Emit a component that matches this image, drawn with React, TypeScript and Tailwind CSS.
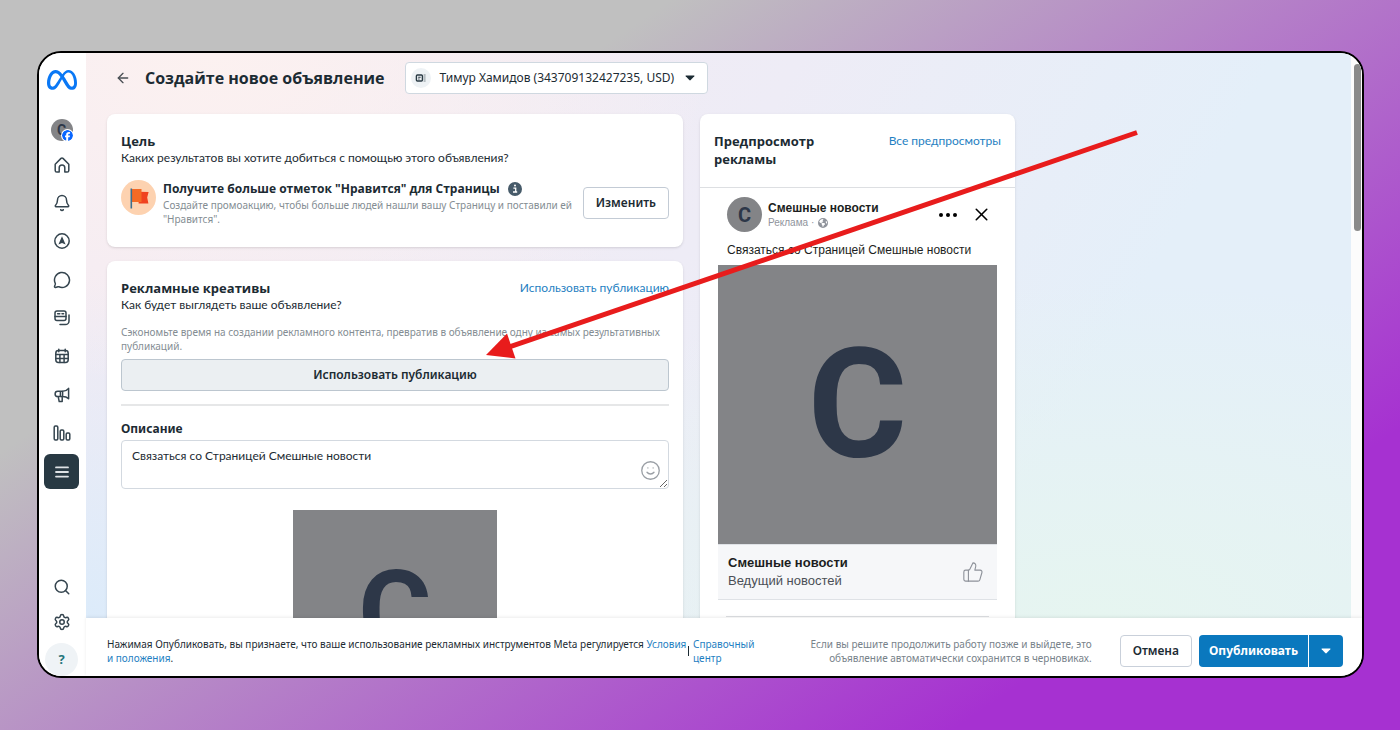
import React from 'react';
import { ArrowLeft, Bell, MessageCircle, Search, Settings, Smile, ThumbsUp, X } from 'lucide-react';
import { FaEarthAmericas, FaFacebook, FaMeta } from 'react-icons/fa6';

function HomeIcon() {
  return (
    <svg viewBox="0 0 18 18" className="size-[18px]" fill="none" stroke="currentColor" strokeWidth="1.5" strokeLinejoin="round">
      <path d="M2.2 8.2 8 2.4q1-.9 2 0l5.8 5.8v6.2a1.6 1.6 0 0 1-1.6 1.6h-2.4v-4.2a2.8 2.8 0 0 0-5.6 0V16H3.8a1.6 1.6 0 0 1-1.6-1.6Z" />
    </svg>
  );
}

function AdsIcon() {
  return (
    <svg viewBox="0 0 18 18" className="size-[18px]" fill="none">
      <circle cx="9" cy="9" r="7.2" stroke="currentColor" strokeWidth="1.5" />
      <path d="M9 4.2 12.6 12.6 9 11 5.4 12.6Z" fill="currentColor" />
    </svg>
  );
}

function PostsIcon() {
  return (
    <svg viewBox="0 0 18 18" className="size-[18px]" fill="none" stroke="currentColor" strokeWidth="1.5" strokeLinecap="round" strokeLinejoin="round">
      <rect x="2" y="2" width="11" height="9.6" rx="2" />
      <path d="M2 7.6h11M4.6 4.8h2.2M9 4.8h1.6" />
      <path d="M16 6v6a3.6 3.6 0 0 1-3.6 3.6H7" />
    </svg>
  );
}

function CalendarIcon() {
  return (
    <svg viewBox="0 0 18 18" className="size-[18px]" fill="none" stroke="currentColor" strokeWidth="1.5" strokeLinecap="round">
      <rect x="2.8" y="3.6" width="12.4" height="11.8" rx="2.6" />
      <path d="M2.8 7.4h12.4M2.8 11.4h12.4M6.9 7.4v8M11.1 7.4v8M5.8 2.2v2.6M12.2 2.2v2.6" />
    </svg>
  );
}

function MegaphoneIcon() {
  return (
    <svg viewBox="0 0 18 18" className="size-[18px]" fill="none" stroke="currentColor" strokeWidth="1.5" strokeLinejoin="round">
      <path d="M9.6 5.2c2.2 0 4.4-1 6-2.8v10.4c-1.6-1.5-3.8-2.2-6-2.2Z" />
      <path d="M9.6 5.2H4.8a2.7 2.7 0 0 0 0 5.4h4.8M5.2 10.6l1 5h3V10.600M7.4 5.2v5.4" />
    </svg>
  );
}

function ChartIcon() {
  return (
    <svg viewBox="0 0 18 18" className="size-[18px]" fill="none" stroke="currentColor" strokeWidth="1.5">
      <rect x="1.2" y="2" width="3.6" height="14" rx="1.2" />
      <rect x="7.2" y="6" width="3.6" height="10" rx="1.2" />
      <rect x="13.2" y="9" width="3.6" height="7" rx="1.2" />
    </svg>
  );
}

function MenuIcon() {
  return (
    <svg viewBox="0 0 18 18" className="size-[18px]" stroke="#dfe3e6" strokeWidth="1.8" strokeLinecap="round">
      <path d="M3 4.4h12M3 9h12M3 13.6h12" />
    </svg>
  );
}

function FlagIcon() {
  return (
    <svg viewBox="0 0 35 35" className="size-[35px] shrink-0">
      <circle cx="17.5" cy="17.5" r="17.5" fill="#fdd2b0" />
      <path d="M17.6 11.8 27.6 12l-1.4 5.6 1.2 6H17.6Z" fill="#f0421f" />
      <path d="M11 9h9.5v13H11Z" fill="#f46a25" />
      <path d="M10.3 8.4v20" stroke="#3a6f8f" strokeWidth="1.6" />
    </svg>
  );
}

function InfoIcon() {
  return (
    <svg viewBox="0 0 14 14" className="size-3.5">
      <circle cx="7" cy="7" r="7" fill="#465a69" />
      <path d="M5.4 6.1h2.3v3.6M5 10h4.2" stroke="#fff" strokeWidth="1.3" fill="none" />
      <circle cx="7" cy="3.6" r="1" fill="#fff" />
    </svg>
  );
}

function AccountIcon() {
  return (
    <svg viewBox="0 0 20 20" className="size-5 shrink-0">
      <circle cx="10" cy="10" r="10" fill="#eef2f5" />
      <rect x="5.4" y="7" width="6" height="6" rx="1" fill="none" stroke="#283943" strokeWidth="1.4" />
      <path d="M7.2 9.2h2.4M7.2 11h1.4" stroke="#283943" strokeWidth="1.1" />
      <path d="M12.6 7h2M12.6 9h2M12.6 11h2M12.6 13h2" stroke="#6b7880" strokeWidth=".9" />
    </svg>
  );
}

function Caret({ className }: { className: string }) {
  return (
    <svg viewBox="0 0 10 6" className={className}>
      <path d="M1 .5h8q.9 0 .3.7L5.7 5.1q-.7.7-1.4 0L.7 1.2Q.1.5 1 .5Z" fill="currentColor" />
    </svg>
  );
}

const navItems = [
  { label: 'Главная', icon: <HomeIcon /> },
  { label: 'Уведомления', icon: <Bell size={18} strokeWidth={2} /> },
  { label: 'Ads Manager', icon: <AdsIcon /> },
  { label: 'Входящие', icon: <MessageCircle size={18} strokeWidth={2} /> },
  { label: 'Контент', icon: <PostsIcon /> },
  { label: 'Планировщик', icon: <CalendarIcon /> },
  { label: 'Реклама', icon: <MegaphoneIcon /> },
  { label: 'Статистика', icon: <ChartIcon /> },
];

function Sidebar() {
  return (
    <aside className="flex w-[47px] shrink-0 flex-col items-center bg-white pr-0.5 text-[#35454f]">
      <FaMeta className="mt-3 size-[30px] text-[#0a78f5]" />
      <div className="relative mt-6 flex size-[22px] items-center justify-center rounded-full bg-[#838487] font-[Roboto] text-sm font-bold leading-none text-[#2d3748]">
        С
        <FaFacebook className="absolute right-0 bottom-0 size-[11px] rounded-full bg-white text-[#0866ff] ring-1 ring-white" />
      </div>
      <nav className="mt-1.5 flex h-[342px] flex-col justify-between">
        {navItems.map((item) => (
          <button key={item.label} aria-label={item.label} className="flex size-[35px] items-center justify-center">
            {item.icon}
          </button>
        ))}
        <button aria-label="Все инструменты" className="flex size-[35px] items-center justify-center rounded-md bg-[#283943]">
          <MenuIcon />
        </button>
      </nav>
      <div className="mt-auto flex flex-col items-center">
        <button aria-label="Поиск" className="flex size-[35px] items-center justify-center">
          <Search size={18} strokeWidth={2} />
        </button>
        <button aria-label="Настройки" className="flex size-[35px] items-center justify-center">
          <Settings size={18} strokeWidth={2} />
        </button>
        <button className="mt-1 flex size-[33px] items-center justify-center rounded-full bg-[#eff3f6] text-[13px] font-bold text-[#25757b]">
          ?
        </button>
      </div>
    </aside>
  );
}

function GoalCard() {
  return (
    <section className="rounded-lg bg-white px-3.5 pt-[18px] pb-[21px] shadow-sm">
      <h2 className="font-['Open_Sans'] text-[13px] leading-[18px] font-bold">Цель</h2>
      <p className="font-[Lato] text-xs leading-4">Каких результатов вы хотите добиться с помощью этого объявления?</p>
      <div className="mt-3.5 flex items-start">
        <FlagIcon />
        <div className="ml-[7px] flex-1">
          <h3 className="flex items-center gap-2 font-['Open_Sans'] text-xs leading-[18px] font-bold">
            Получите больше отметок "Нравится" для Страницы
            <InfoIcon />
          </h3>
          <p className="text-[10px] leading-3.5 text-[#848d93]">
            Создайте промоакцию, чтобы больше людей нашли вашу Страницу и поставили ей "Нравится".
          </p>
        </div>
        <button className="mt-[7px] ml-1.5 h-8 rounded border border-[#c3cbd5] bg-white px-3 text-xs font-semibold">Изменить</button>
      </div>
    </section>
  );
}

function CreativeCard() {
  return (
    <section className="mt-3.5 rounded-lg bg-white px-3.5 pt-[18px] shadow-sm">
      <div className="flex items-center justify-between">
        <h2 className="font-['Open_Sans'] text-[13px] leading-[18px] font-bold">Рекламные креативы</h2>
        <a href="#posts" className="font-[Lato] text-xs leading-[18px] text-[#1f7fc2]">
          Использовать публикацию
        </a>
      </div>
      <p className="font-[Lato] text-xs leading-4">Как будет выглядеть ваше объявление?</p>
      <p className="mt-3 text-[10px] leading-3.5 text-[#848d93]">
        Сэкономьте время на создании рекламного контента, превратив в объявление одну из самых результативных публикаций.
      </p>
      <button className="mt-1.5 h-8 w-full rounded border border-[#bcc6cf] bg-[#ebeff2] text-xs font-semibold">
        Использовать публикацию
      </button>
      <hr className="mt-[13px] border-t-2 border-[#e6e7e8]" />
      <label htmlFor="description" className="mt-3.5 block text-xs leading-[18px] font-bold">
        Описание
      </label>
      <div className="relative mt-0.5 flex">
        <textarea
          id="description"
          defaultValue="Связаться со Страницей Смешные новости"
          className="h-[49px] w-full rounded border border-[#d3d9e0] bg-white px-2.5 py-1.5 font-[Lato] text-xs leading-[18px]"
        />
        <Smile className="absolute right-2 bottom-2 size-[21px] text-[#9a9fa5]" strokeWidth={1.5} />
      </div>
      <div className="mx-auto mt-[21px] flex size-[204px] items-center justify-center bg-[#838487] font-[Roboto] text-[112px] leading-none font-bold text-[#2d3748]">
        С
      </div>
    </section>
  );
}

function PreviewCard() {
  return (
    <section className="w-[315px] shrink-0 rounded-lg bg-white pt-[18px] pb-8 shadow-sm">
      <div className="flex items-start justify-between px-3.5 pb-[19px]">
        <h2 className="w-32 font-['Open_Sans'] text-[13px] leading-[18px] font-bold">Предпросмотр рекламы</h2>
        <a href="#previews" className="font-[Lato] text-xs leading-[18px] text-[#1f7fc2]">
          Все предпросмотры
        </a>
      </div>
      <div className="border-t border-[#dddfe2] px-[18px] pt-[9px] font-['Liberation_Sans',sans-serif] text-[#1c1e21]">
        <div className="flex items-center px-[9px]">
          <div className="flex size-[35px] items-center justify-center rounded-full bg-[#838487] font-[Roboto] text-xl leading-none font-bold text-[#2d3748]">
            С
          </div>
          <div className="ml-1.5 flex-1">
            <p className="text-xs leading-4 font-bold">Смешные новости</p>
            <p className="flex items-center gap-1 text-[10px] leading-3.5 text-[#90949c]">
              Реклама · <FaEarthAmericas className="size-2.5" />
            </p>
          </div>
          <button aria-label="Ещё" className="mr-3.5 flex gap-[3px]">
            <span className="size-1 rounded-full bg-black" />
            <span className="size-1 rounded-full bg-black" />
            <span className="size-1 rounded-full bg-black" />
          </button>
          <button aria-label="Закрыть" className="-mr-1">
            <X size={21} strokeWidth={1.8} className="text-black" />
          </button>
        </div>
        <p className="mt-2.5 px-[9px] text-xs leading-4">Связаться со Страницей Смешные новости</p>
        <div className="mt-[7px] flex aspect-square w-full items-center justify-center bg-[#838487] font-[Roboto] text-[152px] leading-none font-bold text-[#2d3748]">
          С
        </div>
        <div className="flex items-center justify-between border-y border-[#dfe2e6] bg-[#f6f7f9] px-2.5 py-[9px]">
          <div>
            <p className="text-[13px] leading-[18px] font-bold">Смешные новости</p>
            <p className="text-[13px] leading-[18px] text-[#4b4f56]">Ведущий новостей</p>
          </div>
          <ThumbsUp size={22} strokeWidth={1.2} className="mr-[3px] text-[#8d9199]" />
        </div>
        <hr className="mx-2 mt-4 border-[#dddfe2]" />
      </div>
    </section>
  );
}

function Footer() {
  return (
    <footer className="relative flex h-[58px] shrink-0 items-center bg-white pt-2 pr-[19px] pl-[21px] text-[10px] leading-3.5 shadow-[0_-1px_3px_rgba(0,0,0,0.08)]">
      <p className="w-[581px]">
        Нажимая Опубликовать, вы признаете, что ваше использование рекламных инструментов Meta регулируется{' '}
        <a href="#terms" className="text-[#1f7fc2]">
          Условия и положения
        </a>
        .
      </p>
      <span className="mr-1 h-2.5 w-px bg-[#1c2b33]" />
      <a href="#help" className="w-[68px] text-[#1f7fc2]">
        Справочный центр
      </a>
      <p className="ml-auto w-[290px] text-right text-[#77828a]">
        Если вы решите продолжить работу позже и выйдете, это объявление автоматически сохранится в черновиках.
      </p>
      <button className="ml-7 h-8 rounded border border-[#c9d0da] bg-white px-3 text-xs font-semibold">Отмена</button>
      <button className="ml-[7px] h-8 rounded-l bg-[#0a78be] px-2.5 text-xs font-bold text-white">Опубликовать</button>
      <button aria-label="Другие варианты" className="ml-px flex h-8 w-[34px] items-center justify-center rounded-r bg-[#0a78be] text-white">
        <Caret className="h-1.5 w-2.5" />
      </button>
    </footer>
  );
}

export default function App() {
  return (
    <div className="relative h-screen overflow-hidden bg-[linear-gradient(146deg,#c0c0c0_27%,#a631d1_82%)] pt-[51px] pr-9 pb-[52px] pl-[37px] font-['Noto_Sans',sans-serif] text-[#1c2b33]">
      <div className="flex h-full overflow-hidden rounded-3xl border-2 border-black bg-white">
        <Sidebar />
        <div className="flex min-w-0 flex-1 flex-col">
          <div className="flex min-h-0 flex-1">
            <main className="flex-1 overflow-hidden bg-[radial-gradient(ellipse_40%_60%_at_10%_0%,#fcf1f0_0%,#fcf1f000_100%),radial-gradient(ellipse_30%_60%_at_0%_100%,#dcebfa_0%,#dcebfa00_100%),radial-gradient(ellipse_60%_60%_at_80%_100%,#e6f5f0_0%,#e6f5f000_100%),linear-gradient(120deg,#f3ebf3_10%,#eeecf6_45%,#e4eff9_75%)] pl-[21px]">
              <header className="flex items-center pt-[9px]">
                <button aria-label="Назад" className="mr-3.5 ml-2">
                  <ArrowLeft size={16} strokeWidth={2} className="text-[#4a4f54]" />
                </button>
                <h1 className="font-['Open_Sans'] text-base leading-8 font-bold">Создайте новое объявление</h1>
                <div className="relative ml-[21px] flex h-8 items-center rounded border border-[#cfd8e0] bg-white pl-[5px]">
                  <AccountIcon />
                  <select aria-label="Рекламный аккаунт" className="h-full w-[276px] appearance-none bg-transparent pl-2 text-xs outline-none">
                    <option>Тимур Хамидов (343709132427235, USD)</option>
                  </select>
                  <Caret className="pointer-events-none absolute right-3 h-1.5 w-2.5" />
                </div>
              </header>
              <div className="mt-5 flex items-start gap-[17px]">
                <div className="w-[576px] shrink-0">
                  <GoalCard />
                  <CreativeCard />
                </div>
                <PreviewCard />
              </div>
            </main>
            <div className="w-[11px] bg-[#fcfcfc] pt-[11px] pl-[3px]">
              <div className="h-[167px] w-[7px] rounded-full bg-[#8a8a8a]" />
            </div>
          </div>
          <Footer />
        </div>
      </div>
      <svg className="pointer-events-none absolute top-0 left-0 h-[400px] w-[1200px]" viewBox="0 0 1200 400">
        <path d="M1137 132.5 505 348.5" stroke="#e81c1c" strokeWidth="5" />
        <path d="M486 355 507 333.5 515.5 358.5Z" fill="#e81c1c" />
      </svg>
    </div>
  );
}
